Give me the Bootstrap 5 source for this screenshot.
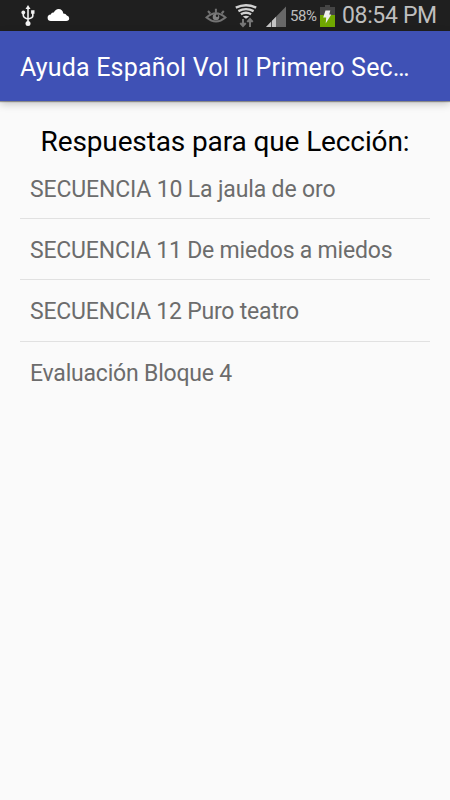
<!DOCTYPE html>
<html lang="es">
<head>
<meta charset="utf-8">
<meta name="viewport" content="width=device-width, initial-scale=1">
<title>Ayuda Español</title>
<link href="https://cdn.jsdelivr.net/npm/bootstrap@5.3.0/dist/css/bootstrap.min.css" rel="stylesheet">
<style>
body{font-family:Roboto,"Liberation Sans",sans-serif;background:#fafafa;min-height:800px;overflow:hidden}
.status-bar{height:31px;background:#1f1f1f;color:#bebebe;padding-left:21px;padding-right:13px}
.status-bar svg{display:block;flex:none}
.battery-text{font-size:15px;line-height:20px;padding-top:1px;width:27px;margin-left:4px;letter-spacing:-.4px}
.clock{font-size:23px;line-height:31px;margin-left:6px;width:95px;letter-spacing:-.35px}
.app-bar{height:70px;background:#3f51b5;padding:3px 20px 0;box-shadow:0 1px 1px rgba(0,0,0,.35),0 3px 8px rgba(0,0,0,.22)}
.app-title{font-size:25px;line-height:30px;color:#fff;letter-spacing:.17px}
.heading{font-size:28px;line-height:34px;color:#000;margin-top:24px;letter-spacing:-.12px}
.lessons{margin:0 20px}
.lessons .list-group-item{height:61.3px;padding:2px 10px 0;background:transparent;color:#6c6c6c;border-color:#e1e1e1;font-size:23px;line-height:60px;letter-spacing:-.2px}
.lessons .list-group-item:first-child{height:60px;padding-top:1px;letter-spacing:-.15px}
</style>
</head>
<body>
<header class="status-bar d-flex align-items-center text-nowrap">
  <svg width="15" height="31" viewBox="21 0 15 31" fill="none" stroke="#f2f2f2" stroke-width="1.6"><path d="M28 8v14M23.3 12v3.5q0 2.2 4.7 3.5M32.8 13v3q0 1.8-4.8 3"/><path d="M28 5l2.5 4h-5zM31.1 10.3h3.4v3.4h-3.4z" fill="#f2f2f2" stroke="none"/><circle cx="23.3" cy="12.5" r="1.9" fill="#f2f2f2" stroke="none"/><circle cx="28" cy="23.4" r="2.5" fill="#f2f2f2" stroke="none"/></svg>
  <svg width="34" height="31" viewBox="36 0 34 31"><path d="M51 21a3.3 3.3 0 0 1-.2-6.6q.7-2.400 3-1.900Q55.500 9 58.600 9q4 .2 4.700 4.500 2.600.1 3.500 2 2.400.4 2.400 2.800 0 2.700-3 2.700z" fill="#fff"/></svg>
  <svg class="ms-auto" width="22" height="31" viewBox="205 0 22 31" fill="none" stroke="#737373" stroke-width="2"><path d="M206.500 17.500q9.300-8.600 19 0-9.500 8-19 0zM208 11l2.200 2.500M215.900 8.800v3.500M223.800 11l-2.200 2.500"/><circle cx="216" cy="17" r="3.300" fill="#808080" stroke="none"/><circle cx="217" cy="15.800" r="1.200" fill="#1f1f1f" stroke="none"/></svg>
  <svg width="39" height="31" viewBox="226 0 39 31" fill="none"><g stroke="#d2d2d2" stroke-width="2.400"><path d="M234.800 7.700q10.200-4.800 20.400 0M237.400 11.100q7.600-4 15.200 0M239.900 14.300q5.100-3 10.200 0"/></g><path d="M241.700 16.500q3.300-1.600 6.600 0l-3.300 2.300z" fill="#d2d2d2"/><path d="M242 19v6M239.300 23l2.700 3 2.700-3M249 27v-7M246.300 22l2.700-3 2.700 3" stroke="#777" stroke-width="2"/></svg>
  <svg width="20" height="31" viewBox="266 0 20 31"><path d="M266 27L286 6.500V27z" fill="#686868"/><path d="M266 27l10-10.250V27z" fill="#c4c4c4"/><path d="M271.500 20v7" stroke="#1f1f1f" stroke-width=".7"/></svg>
  <span class="battery-text">58%</span>
  <svg width="19" height="31" viewBox="317 0 19 31"><path d="M325 5h5v2h5v8h-15V7h5z" fill="#454545"/><path d="M320 15h15v12h-15z" fill="#70a800"/><path d="M325.500 10.500h4.800l-1 4h2l-5.600 9 .5-6h-3z" fill="#eee"/></svg>
  <span class="clock">08:54 PM</span>
</header>
<nav class="app-bar d-flex align-items-center position-relative">
  <span class="app-title text-nowrap">Ayuda Español Vol II Primero Sec…</span>
</nav>
<main>
  <h1 class="heading text-center fw-normal mb-0 text-nowrap">Respuestas para que Lección:</h1>
  <ul class="lessons list-group list-group-flush text-nowrap">
    <li class="list-group-item">SECUENCIA 10 La jaula de oro</li>
    <li class="list-group-item">SECUENCIA 11 De miedos a miedos</li>
    <li class="list-group-item">SECUENCIA 12 Puro teatro</li>
    <li class="list-group-item">Evaluación Bloque 4</li>
  </ul>
</main>
<script src="https://cdn.jsdelivr.net/npm/bootstrap@5.3.0/dist/js/bootstrap.bundle.min.js"></script>
</body>
</html>
